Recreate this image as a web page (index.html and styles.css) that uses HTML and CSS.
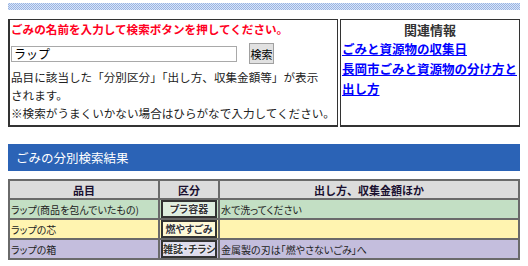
FILE: index.html
```html
<!DOCTYPE html>
<html lang="ja">
  <head>
    <meta charset="UTF-8" />
    <title>ごみの分別検索</title>
    <link rel="stylesheet" href="styles.css">
  </head>
  <body>
    <div class="stripe"></div>

    <div class="search-box">
      <div class="search-main">
        <p class="search-title">ごみの名前を入力して検索ボタンを押してください。</p>
        <form class="search-form">
          <input type="text" class="search-input" value="ラップ" />
          <button type="button" class="search-button">検索</button>
        </form>
        <p class="search-note">品目に該当した「分別区分」「出し方、収集金額等」が表示<br />されます。<br />※検索がうまくいかない場合はひらがなで入力してください。</p>
      </div>
      <div class="related">
        <h2>関連情報</h2>
        <a href="#">ごみと資源物の収集日</a><br />
        <a href="#">長岡市ごみと資源物の分け方と出し方</a>
      </div>
    </div>

    <h1 class="result-title">ごみの分別検索結果</h1>

    <table class="result-table">
      <colgroup>
        <col class="col-item" />
        <col class="col-kind" />
        <col />
      </colgroup>
      <thead>
        <tr>
          <th>品目</th>
          <th>区分</th>
          <th>出し方、収集金額ほか</th>
        </tr>
      </thead>
      <tbody>
        <tr class="row-plastic">
          <td>ラップ(商品を包んでいたもの)</td>
          <td><span class="badge">プラ容器</span></td>
          <td>水で洗ってください</td>
        </tr>
        <tr class="row-burn">
          <td>ラップの芯</td>
          <td><span class="badge">燃やすごみ</span></td>
          <td></td>
        </tr>
        <tr class="row-paper">
          <td>ラップの箱</td>
          <td><span class="badge">雑誌・チラシ</span></td>
          <td>金属製の刃は「燃やさないごみ」へ</td>
        </tr>
      </tbody>
    </table>
  </body>
</html>
```

FILE: styles.css
```css
* {
  box-sizing: border-box;
  margin: 0;
  padding: 0;
}

body {
  padding: 3px 8px;
  font-family: "Noto Sans CJK JP", sans-serif;
  font-size: 11.6px;
  color: #222;
  background: #fff;
}

.stripe {
  height: 7px;
  background: repeating-conic-gradient(#98b4e4 0 25%, #d9e4f6 0 50%) 0 0 / 2px 2px;
}

/* search area */
.search-box {
  display: flex;
  gap: 2px;
  margin-top: 9px;
  height: 108px;
}

.search-main {
  width: 330px;
  border: 1px solid #333;
  border-left-width: 2px;
  border-bottom-width: 2px;
  padding: 1px 0 0 1px;
}

.search-title {
  color: #ff0022;
  font-weight: 700;
  font-size: 11.6px;
  line-height: 16px;
}

.search-form {
  display: flex;
  align-items: center;
  gap: 12px;
  margin-top: 6px;
  height: 21px;
}

.search-input {
  width: 226px;
  height: 16px;
  border: 1px solid #a9a9a9;
  padding: 0 2px;
  font: inherit;
  font-size: 12px;
  color: #000;
}

.search-button {
  width: 25px;
  height: 21px;
  padding: 0;
  border: 1px solid #a0a0a0;
  background: #e1e1e1;
  font: inherit;
  font-size: 11px;
  color: #000;
  white-space: nowrap;
  overflow: hidden;
}

.search-note {
  margin-top: 4px;
  line-height: 18px;
  white-space: nowrap;
}

.related {
  flex: 1;
  border: 1px solid #333;
  border-bottom-width: 2px;
  padding: 1px 1px 0 1px;
  line-height: 20px;
}

.related h2 {
  text-align: center;
  font-size: 13px;
  font-weight: 700;
  color: #333;
  line-height: 17px;
  margin-bottom: 1px;
}

.related a {
  color: #0000ff;
  font-weight: 700;
  font-size: 12.5px;
}

/* results */
.result-title {
  margin-top: 17px;
  height: 27px;
  background: #2b63b6;
  color: #fff;
  font-size: 12.5px;
  font-weight: 400;
  line-height: 27px;
  padding-left: 8px;
}

.result-table {
  width: 100%;
  margin-top: 8px;
  border-collapse: collapse;
  table-layout: fixed;
  font-size: 10px;
  font-feature-settings: "palt";
}

.col-item {
  width: 150px;
}
.col-kind {
  width: 60px;
}

.result-table th,
.result-table td {
  border: 2px solid #6a6a6a;
  height: 20px;
  padding: 0 1px;
  text-align: left;
  color: #222;
  white-space: nowrap;
}

.result-table th {
  background: #dcdcdc;
  text-align: center;
  font-size: 11px;
  font-weight: 700;
  color: #1a1030;
  height: 19px;
  font-feature-settings: normal;
}

.row-plastic td {
  background: #c3dfc4;
}
.row-burn td {
  background: #fff4b0;
}
.row-paper td {
  background: #c4bedd;
}

.result-table td:nth-child(2) {
  padding: 0;
  text-align: center;
}

.badge {
  display: block;
  margin: 0 1px;
  border: 2px solid #333;
  background: rgba(255, 255, 255, 0.45);
  font-weight: 700;
  font-size: 10px;
  line-height: 14px;
  color: #333;
  white-space: nowrap;
  overflow: hidden;
  text-shadow: 0 0 2px #fff, 0 0 2px #fff;
}
```
